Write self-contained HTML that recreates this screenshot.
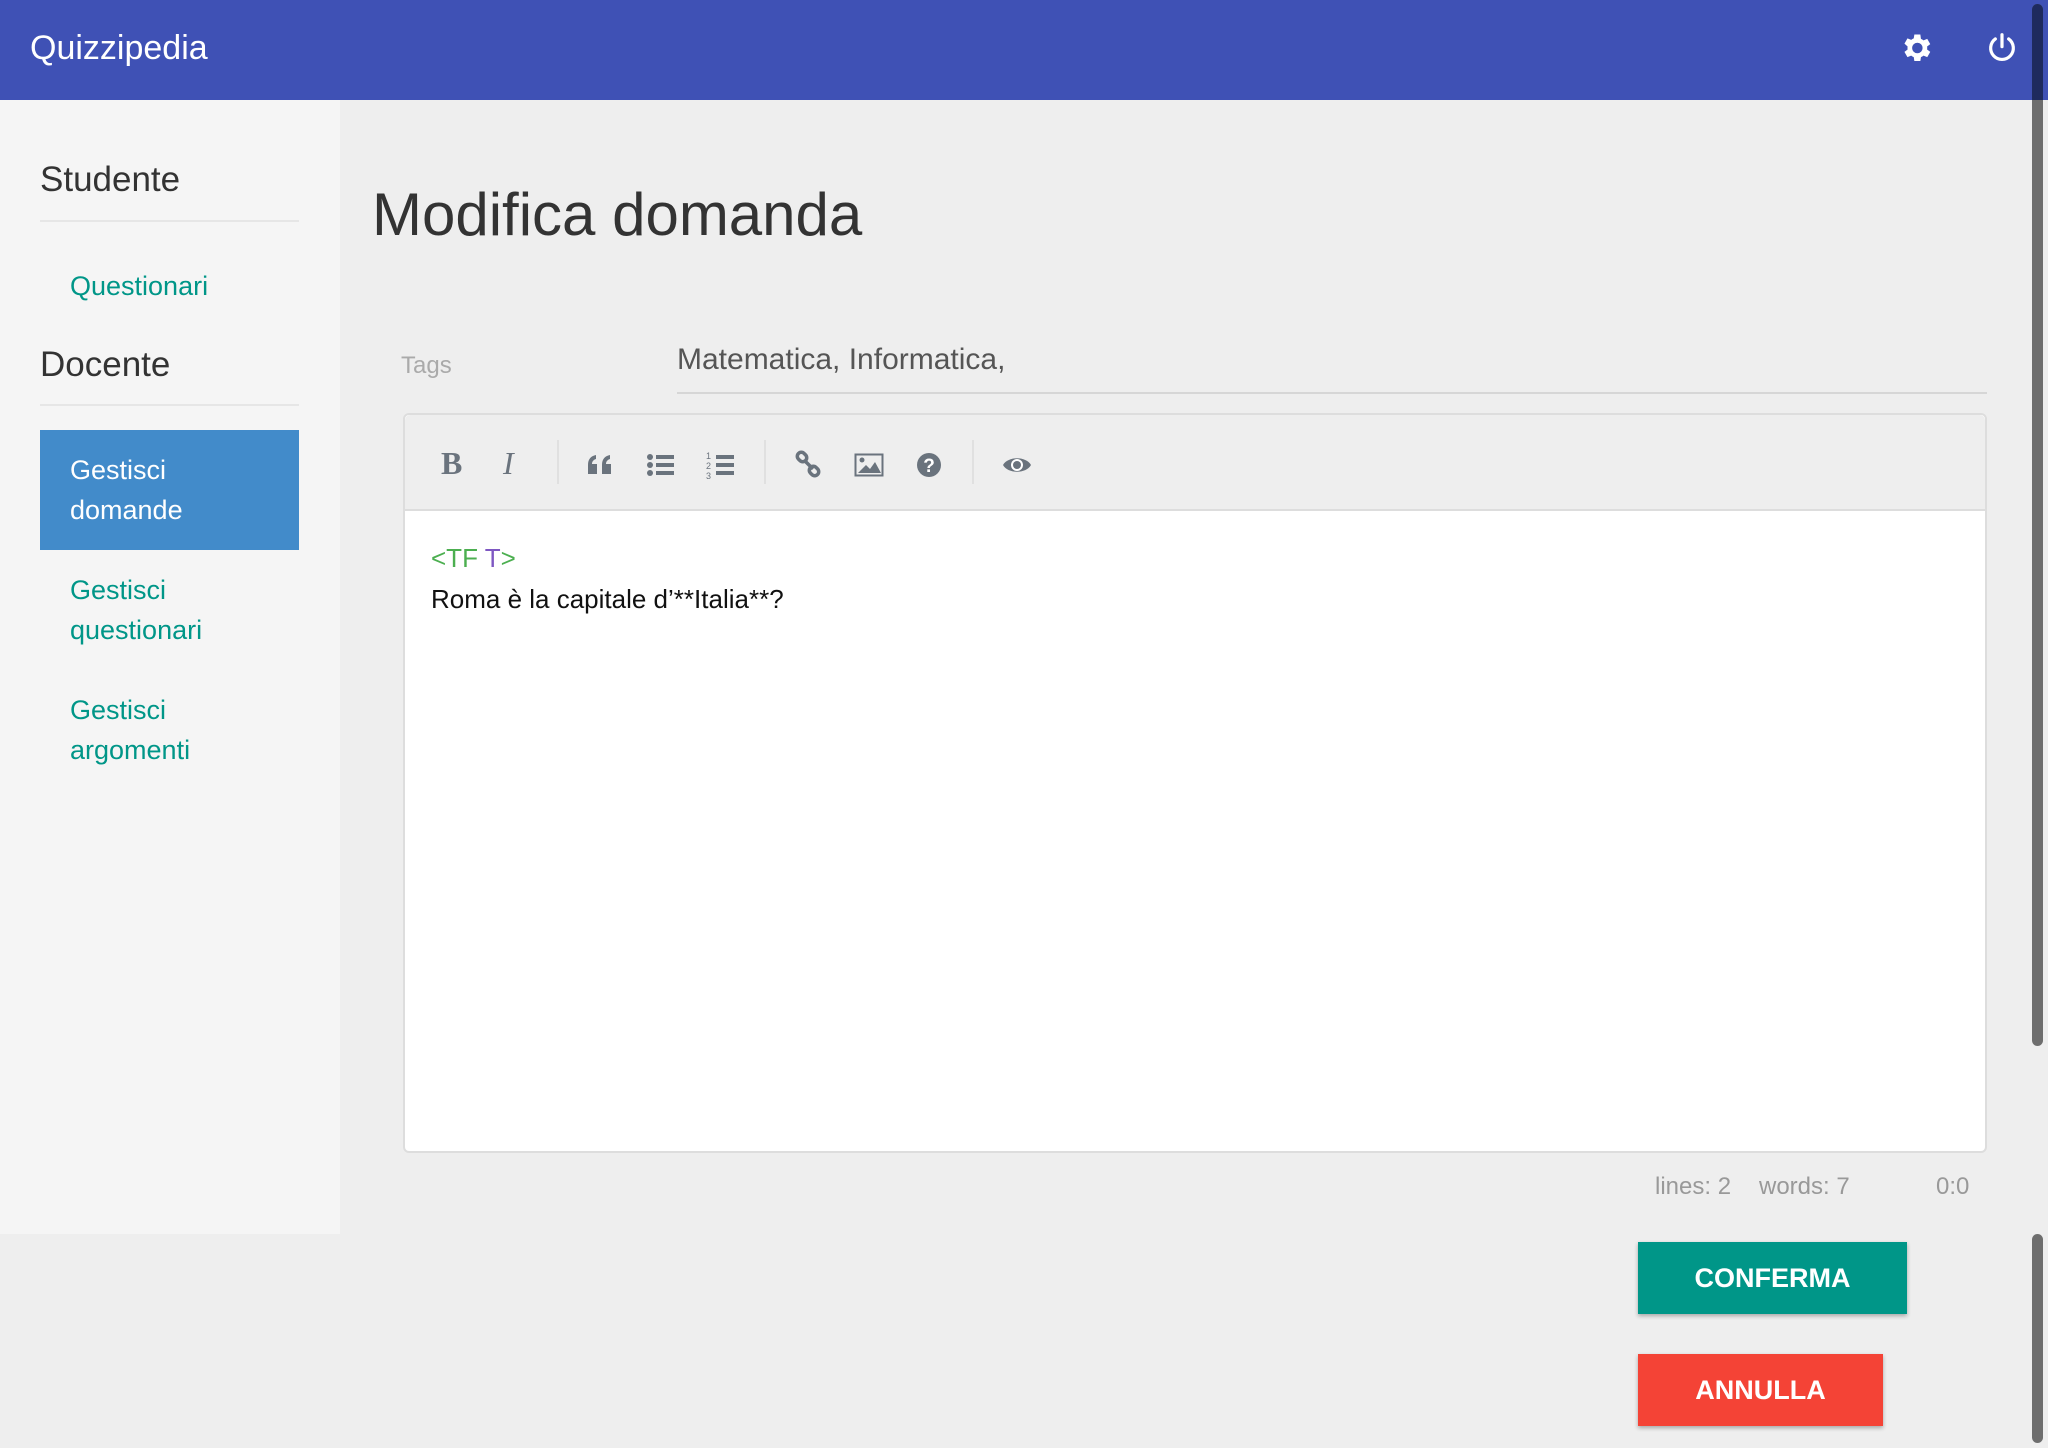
<!DOCTYPE html>
<html><head><meta charset="utf-8"><style>
*{margin:0;padding:0;box-sizing:border-box}
body{width:2048px;height:1448px;overflow:hidden;background:#eeeeee;font-family:"Liberation Sans",sans-serif;position:relative}
.a{position:absolute;white-space:nowrap}
.hdr{position:absolute;left:0;top:0;width:2048px;height:100px;background:#3f51b5}
.side{position:absolute;left:0;top:100px;width:340px;height:1134px;background:#f5f5f5}
.t{color:#009688;font-size:27px;line-height:40px}
.ic{position:absolute;top:450px;width:30px;height:30px;color:#6a737d}
.sep{position:absolute;top:440px;width:2px;height:44px;background:#e0e0e0}
</style></head><body>
<div class="hdr"></div>
<div class="a" style="left:30px;top:29px;font-size:34px;color:#fff">Quizzipedia</div>
<svg class="a" style="left:1898px;top:30px" width="36" height="36" viewBox="0 0 24 24"><path fill="#fff" d="M19.4 13a7.5 7.5 0 0 0 0-2l2.1-1.6-2-3.5-2.5 1a7.3 7.3 0 0 0-1.7-1L14.9 3h-4l-.4 2.6a7.3 7.3 0 0 0-1.7 1l-2.5-1-2 3.5L6.4 11a7.5 7.5 0 0 0 0 2l-2.1 1.6 2 3.5 2.5-1a7.3 7.3 0 0 0 1.7 1l.4 2.6h4l.4-2.6a7.3 7.3 0 0 0 1.7-1l2.5 1 2-3.5zM12.9 15.5a3.5 3.5 0 1 1 0-7 3.5 3.5 0 0 1 0 7z"/></svg>
<svg class="a" style="left:1986px;top:32px" width="32" height="32" viewBox="0 0 24 24"><path fill="none" stroke="#fff" stroke-width="2.4" stroke-linecap="round" d="M12 2v9M7 5.2a8.5 8.5 0 1 0 10 0"/></svg>
<div class="a" style="left:2032px;top:4px;width:11px;height:1042px;border-radius:6px;background:#6e6e6e"></div>
<div class="a" style="left:2032px;top:4px;width:11px;height:96px;border-radius:6px 6px 0 0;background:#1e2a5e"></div>
<div class="a" style="left:2032px;top:1234px;width:11px;height:209px;border-radius:6px;background:#6e6e6e"></div>
<div class="side"></div>
<div class="a" style="left:40px;top:160px;font-size:35px;color:#333">Studente</div>
<div class="a" style="left:40px;top:220px;width:259px;height:2px;background:#e6e6e6"></div>
<div class="a t" style="left:70px;top:266px">Questionari</div>
<div class="a" style="left:40px;top:345px;font-size:35px;color:#333">Docente</div>
<div class="a" style="left:40px;top:404px;width:259px;height:2px;background:#e6e6e6"></div>
<div class="a" style="left:40px;top:430px;width:259px;height:120px;background:#428bca"></div>
<div class="a t" style="left:70px;top:450px;color:#fff">Gestisci<br>domande</div>
<div class="a t" style="left:70px;top:570px">Gestisci<br>questionari</div>
<div class="a t" style="left:70px;top:690px">Gestisci<br>argomenti</div>
<div class="a" style="left:372px;top:180px;font-size:60px;color:#333">Modifica domanda</div>
<div class="a" style="left:401px;top:352px;font-size:24px;color:#aaa">Tags</div>
<div class="a" style="left:677px;top:343px;font-size:30px;color:#555">Matematica, Informatica,</div>
<div class="a" style="left:677px;top:392px;width:1310px;height:2px;background:#d6d6d6"></div>
<div class="a" style="left:403px;top:413px;width:1584px;height:740px;background:#fff;border:2px solid #ddd;border-radius:6px"></div>
<div class="a" style="left:405px;top:415px;width:1580px;height:96px;background:#eeeeee;border-bottom:2px solid #ddd;border-radius:5px 5px 0 0"></div>
<div class="a" style="left:441px;top:445px;font:bold 32px 'Liberation Serif',serif;color:#6a737d">B</div>
<div class="a" style="left:503px;top:445px;font:italic 32px 'Liberation Serif',serif;color:#6a737d">I</div>
<div class="sep" style="left:557px"></div>
<svg class="ic" style="left:586px" viewBox="0 0 30 30"><g fill="#6a737d"><path d="M2 24V15C2 9 5 6 10 5v4c-3 1-4 3-4 5h5v10z"/><path d="M16 24V15c0-6 3-9 8-10v4c-3 1-4 3-4 5h5v10z"/></g></svg>
<svg class="ic" style="left:646px" viewBox="0 0 30 30"><g fill="#6a737d"><circle cx="4" cy="7" r="3"/><circle cx="4" cy="15" r="3"/><circle cx="4" cy="23" r="3"/><rect x="10" y="5" width="18" height="4"/><rect x="10" y="13" width="18" height="4"/><rect x="10" y="21" width="18" height="4"/></g></svg>
<svg class="ic" style="left:706px" viewBox="0 0 30 30"><g fill="#6a737d"><text x="0" y="9" font-size="9" font-family="Liberation Sans">1</text><text x="0" y="19" font-size="9" font-family="Liberation Sans">2</text><text x="0" y="29" font-size="9" font-family="Liberation Sans">3</text><rect x="10" y="5" width="18" height="4"/><rect x="10" y="13" width="18" height="4"/><rect x="10" y="21" width="18" height="4"/></g></svg>
<div class="sep" style="left:764px"></div>
<svg class="ic" style="left:794px" viewBox="0 0 30 30"><g fill="none" stroke="#6a737d" stroke-width="3.5"><rect x="3" y="3" width="10" height="8" rx="4" transform="rotate(45 8 7)"/><rect x="15" y="17" width="10" height="8" rx="4" transform="rotate(45 20 21)"/><path d="M11 11l8 8"/></g></svg>
<svg class="ic" style="left:854px" viewBox="0 0 30 30"><rect x="1.5" y="4.5" width="27" height="21" fill="none" stroke="#6a737d" stroke-width="2"/><circle cx="8" cy="10" r="2.5" fill="#6a737d"/><path d="M4 23l8-8 4 4 5-7 6 11z" fill="#6a737d"/></svg>
<svg class="ic" style="left:914px" viewBox="0 0 30 30"><circle cx="15" cy="15" r="12" fill="#6a737d"/><text x="15" y="22" text-anchor="middle" font-size="19" font-weight="bold" fill="#fff" font-family="Liberation Sans">?</text></svg>
<div class="sep" style="left:972px"></div>
<svg class="ic" style="left:1002px" viewBox="0 0 30 30"><path d="M1 15C6 6 24 6 29 15C24 24 6 24 1 15z" fill="#6a737d"/><circle cx="15" cy="15" r="6" fill="#fff"/><circle cx="15" cy="15" r="4" fill="#6a737d"/></svg>
<div class="a" style="left:431px;top:543px;font-size:26px;color:#4caf50">&lt;TF <span style="color:#7e57c2">T</span>&gt;</div>
<div class="a" style="left:431px;top:584px;font-size:26px;color:#111">Roma è la capitale d’**Italia**?</div>
<div class="a" style="left:1655px;top:1173px;font-size:24px;color:#999">lines: 2</div>
<div class="a" style="left:1759px;top:1173px;font-size:24px;color:#999">words: 7</div>
<div class="a" style="left:1936px;top:1173px;font-size:24px;color:#999">0:0</div>
<div class="a" style="left:1638px;top:1242px;width:269px;height:72px;background:#009688;color:#fff;font-weight:bold;font-size:27px;line-height:72px;text-align:center;box-shadow:0 2px 4px rgba(0,0,0,.3)">CONFERMA</div>
<div class="a" style="left:1638px;top:1354px;width:245px;height:72px;background:#f44336;color:#fff;font-weight:bold;font-size:27px;line-height:72px;text-align:center;box-shadow:0 2px 4px rgba(0,0,0,.3)">ANNULLA</div>
</body></html>
